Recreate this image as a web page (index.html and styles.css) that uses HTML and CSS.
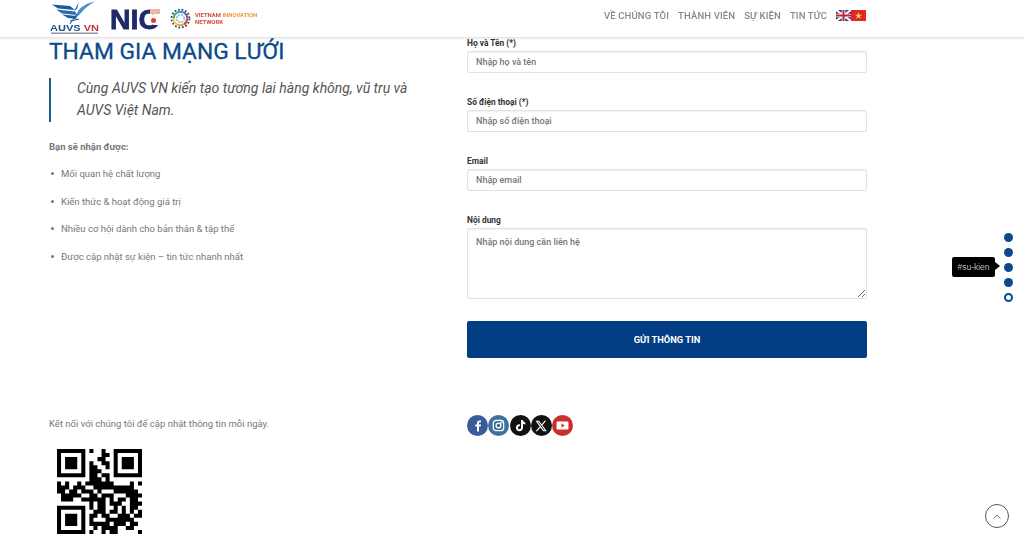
FILE: index.html
```html
<!DOCTYPE html>
<html lang="vi">
<head>
    <meta charset="UTF-8">
    <meta name="viewport" content="width=device-width, initial-scale=1.0">
    <title>AUVS VN</title>
    <link rel="stylesheet" href="styles.css">
</head>
<body>
    <header class="header">
        <div class="logos">
            <svg class="logo-auvs" width="52" height="37" viewBox="0 0 52 37">
                <path d="M2 4.500 L20 6 L25 10 L8 8.500 Z" fill="#1f5c9e"/>
                <path d="M6 9.500 L25 11.500 L27 15 L12 13.500 Z" fill="#2a6cb0"/>
                <path d="M12 14.500 L27 16 L26 19 L18 18 Z" fill="#1f5c9e"/>
                <path d="M45 1.500 C37 3 32 6 28 11 L25 19 L31 13 C35 8 39 5 45 1.500 Z" fill="#4d8fc9"/>
                <path d="M29 2 L27 9 L24 11 Z" fill="#2a6cb0"/>
                <path d="M27 14 L20 24 M20 21 L29 19" stroke="#1c4f8a" stroke-width="1" fill="none"/>
                <text class="auvs-word" x="0" y="30.500" textLength="49" lengthAdjust="spacingAndGlyphs">AUVS <tspan fill="#c8343c">VN</tspan></text>
                <rect x="1" y="32.500" width="47" height="1.500" fill="#8d97a5"/>
            </svg>
            <svg class="logo-nic" width="50" height="37" viewBox="0 0 50 37">
                <text class="nic-word" x="0" y="29" textLength="49" lengthAdjust="spacingAndGlyphs">NIC</text>
                <rect x="43" y="14" width="7" height="11" fill="#fff"/>
                <rect x="40" y="9" width="10" height="5" fill="#eeb9a2"/>
                <circle cx="43.500" cy="20.500" r="2.500" fill="#e2402f"/>
            </svg>
            <svg class="logo-vin" width="21" height="21" viewBox="0 0 21 21" fill="none">
                <circle cx="10.500" cy="10.500" r="9" stroke="#3a4a7a" stroke-width="1.800" stroke-dasharray="1.800 1.800"/>
                <circle cx="10.500" cy="10.500" r="6.800" stroke="#d8453a" stroke-width="2" pathLength="6" stroke-dasharray="1 5"/>
                <circle cx="10.500" cy="10.500" r="6.800" stroke="#f0a52e" stroke-width="2" pathLength="6" stroke-dasharray="1 5" stroke-dashoffset="-1"/>
                <circle cx="10.500" cy="10.500" r="6.800" stroke="#f4d23a" stroke-width="2" pathLength="6" stroke-dasharray="1 5" stroke-dashoffset="-2"/>
                <circle cx="10.500" cy="10.500" r="6.800" stroke="#4fae62" stroke-width="2" pathLength="6" stroke-dasharray="1 5" stroke-dashoffset="-3"/>
                <circle cx="10.500" cy="10.500" r="6.800" stroke="#2a9ccc" stroke-width="2" pathLength="6" stroke-dasharray="1 5" stroke-dashoffset="-4"/>
                <circle cx="10.500" cy="10.500" r="6.800" stroke="#7a4ea0" stroke-width="2" pathLength="6" stroke-dasharray="1 5" stroke-dashoffset="-5"/>
                <circle cx="10.500" cy="10.500" r="3.800" stroke="#6fc0d8" stroke-width="1.500" stroke-dasharray="2 1"/>
            </svg>
            <div class="vin-text"><span class="vin-red">VIETNAM</span> INNOVATION<br><span class="vin-red">NETWORK</span></div>
        </div>
        <nav class="nav">
            <a href="#">VỀ CHÚNG TÔI</a>
            <a href="#">THÀNH VIÊN</a>
            <a href="#">SỰ KIỆN</a>
            <a href="#">TIN TỨC</a>
            <span class="flags">
                <svg width="15" height="11" viewBox="0 0 15 11">
                    <rect width="15" height="11" fill="#2b3a7a"/>
                    <path d="M0 0 L15 11 M15 0 L0 11" stroke="#fff" stroke-width="2.200"/>
                    <path d="M7.500 0 V11 M0 5.500 H15" stroke="#fff" stroke-width="3.600"/>
                    <path d="M7.500 0 V11 M0 5.500 H15" stroke="#c8202f" stroke-width="2"/>
                </svg>
                <svg width="15" height="11" viewBox="0 0 15 11">
                    <rect width="15" height="11" fill="#e0262c"/>
                    <polygon points="7.500,2 8.400,4.700 11.200,4.700 8.900,6.300 9.800,9 7.500,7.300 5.200,9 6.100,6.300 3.800,4.700 6.600,4.700" fill="#fbd92f"/>
                </svg>
            </span>
        </nav>
    </header>

    <main class="main">
        <section class="join">
            <div class="info">
                <h2 class="title">THAM GIA MẠNG LƯỚI</h2>
                <blockquote class="quote">Cùng AUVS VN kiến tạo tương lai hàng không, vũ trụ và AUVS Việt Nam.</blockquote>
                <p class="lead">Bạn sẽ nhận được:</p>
                <ul class="benefits">
                    <li>Mối quan hệ chất lượng</li>
                    <li>Kiến thức &amp; hoạt động giá trị</li>
                    <li>Nhiều cơ hội dành cho bản thân &amp; tập thể</li>
                    <li>Được cập nhật sự kiện – tin tức nhanh nhất</li>
                </ul>
            </div>
            <form class="form">
                <label for="name">Họ và Tên (*)</label>
                <input type="text" id="name" placeholder="Nhập họ và tên">
                <label for="phone">Số điện thoại (*)</label>
                <input type="text" id="phone" placeholder="Nhập số điện thoại">
                <label for="email">Email</label>
                <input type="email" id="email" placeholder="Nhập email">
                <label for="content">Nội dung</label>
                <textarea id="content" placeholder="Nhập nội dung cần liên hệ"></textarea>
                <button type="submit">GỬI THÔNG TIN</button>
            </form>
        </section>

        <footer class="footer">
            <div class="connect">
                <p>Kết nối với chúng tôi để cập nhật thông tin mỗi ngày.</p>
                <svg class="qr" width="85" height="85" viewBox="0 0 21 21">
                    <path fill="#000" d="M0 0h7v7h-7z M14 0h7v7h-7z M0 14h7v7h-7z"/>
                    <path fill="#fff" d="M1 1h5v5h-5z M15 1h5v5h-5z M1 15h5v5h-5z"/>
                    <path fill="#000" d="M2 2h3v3h-3z M16 2h3v3h-3z M2 16h3v3h-3z"/>
                    <path fill="none" stroke="#000" stroke-width="1" d="M8 .5h1M11 .5h1 M11 1.500h2 M10 2.500h2 M8 3.500h1M11 3.500h2 M8 4.500h2M12 4.500h1 M8 5.500h3 M8 6.500h2M11 6.500h2 M8 7.500h3M12 7.500h1 M0 8.500h1M2 8.500h1M5 8.500h1M7 8.500h7M18 8.500h1M20 8.500h1 M0 9.500h3M4 9.500h3M9 9.500h10 M0 10.500h2M3 10.500h2M6 10.500h3M10 10.500h1M14 10.500h6 M1 11.500h5M8 11.500h2M11 11.500h3M17 11.500h4 M1 12.500h3M6 12.500h6M13 12.500h1M15 12.500h2M18 12.500h2 M8 13.500h1M10 13.500h2M13 13.500h3M18 13.500h3 M8 14.500h1M10 14.500h2M14 14.500h1M16 14.500h1M18 14.500h2 M9 15.500h3M13 15.500h2M16 15.500h1M18 15.500h1M20 15.500h1 M8 16.500h2M11 16.500h2M15 16.500h3M19 16.500h2 M8 17.500h1M12 17.500h7 M8 18.500h5M14 18.500h3M18 18.500h2 M9 19.500h1M11 19.500h4M17 19.500h2 M8 20.500h1M11 20.500h1M13 20.500h2M20 20.500h1"/>
                </svg>
            </div>
            <div class="socials">
                <a class="social fb" href="#" aria-label="Facebook">
                    <svg width="12" height="12" viewBox="0 0 24 24"><path fill="#fff" d="M14 23v-10h3.400l.6-4h-4V6.600c0-1.200.5-2 2.100-2H18V1.200C17.500 1.100 16.300 1 15 1c-3 0-5 1.800-5 5.100V9H6.600v4H10v10z"/></svg>
                </a>
                <a class="social ig" href="#" aria-label="Instagram">
                    <svg width="13" height="13" viewBox="0 0 24 24" fill="none" stroke="#fff" stroke-width="2.400"><rect x="2.500" y="2.500" width="19" height="19" rx="5"/><circle cx="12" cy="12" r="4.500"/><circle cx="17.500" cy="6.500" r="0.600" fill="#fff"/></svg>
                </a>
                <a class="social tt" href="#" aria-label="TikTok">
                    <svg width="13" height="13" viewBox="0 0 24 24"><path fill="#fff" d="M13 2h3.600c.3 2.600 1.800 4.200 4.400 4.500v3.600c-1.600 0-3.100-.5-4.400-1.400v7c0 3.900-2.900 6.800-6.600 6.800-3.600 0-6.500-2.900-6.500-6.500 0-3.900 3.400-6.900 7.400-6.300v3.700c-2-.5-3.800.8-3.800 2.600 0 1.600 1.300 2.900 2.900 2.900 1.700 0 3-1.300 3-3.200z"/></svg>
                </a>
                <a class="social xx" href="#" aria-label="X">
                    <svg width="12" height="12" viewBox="0 0 24 24"><path fill="#fff" d="M1 1.500h7.200l5.100 6.900 6-6.900h3l-7.600 8.800 9 12.200h-7.200l-5.700-7.700-6.700 7.700h-3l8.300-9.500zm4.400 2 12.300 17h1.900L7.300 3.500z"/></svg>
                </a>
                <a class="social yt" href="#" aria-label="YouTube">
                    <svg width="13" height="13" viewBox="0 0 24 24"><path fill="#fff" d="M3.500 4.500h17c1.500 0 2.500 1 2.500 2.500v10c0 1.500-1 2.500-2.500 2.500h-17C2 19.500 1 18.500 1 17V7c0-1.500 1-2.500 2.500-2.500z"/><path fill="#c9302c" d="M10 8.500v7l6-3.500z"/></svg>
                </a>
            </div>
        </footer>
    </main>

    <div class="dots">
        <a class="dot" href="#"></a>
        <a class="dot" href="#"></a>
        <a class="dot" href="#"><span class="tip">#su-kien</span></a>
        <a class="dot" href="#"></a>
        <a class="dot active" href="#"></a>
    </div>

    <a class="to-top" href="#" aria-label="Lên đầu trang">
        <svg width="8" height="5" viewBox="0 0 8 5" fill="none" stroke="#777" stroke-width="1"><path d="M0.500 4.500 L4 1 L7.500 4.500"/></svg>
    </a>
</body>
</html>
```

FILE: styles.css
```css
* {
    box-sizing: border-box;
}

html, body {
    height: 100%;
    overflow: hidden;
}

body {
    margin: 0;
    font-family: Roboto, "Liberation Sans", sans-serif;
    font-size: 9.500px;
    color: #777;
    background: #fff;
}

.header {
    position: fixed;
    top: 0;
    left: 0;
    right: 0;
    z-index: 5;
    height: 37px;
    display: flex;
    justify-content: space-between;
    align-items: center;
    padding: 0 158px 0 50px;
    background: #fff;
    box-shadow: 0 1px 3px rgba(0, 0, 0, 0.16);
}

.logos {
    display: flex;
    align-items: center;
}

.logos svg {
    display: block;
}

.auvs-word {
    font-family: "Liberation Sans", sans-serif;
    font-size: 9.500px;
    font-weight: 700;
    fill: #1d4f8c;
}

.logo-nic {
    margin-left: 8px;
}

.nic-word {
    font-family: "Liberation Sans", sans-serif;
    font-size: 27px;
    font-weight: 700;
    fill: #1e2a6b;
    stroke: #1e2a6b;
    stroke-width: 0.800px;
}

.logo-vin {
    margin-left: 10px;
}

.vin-text {
    margin-left: 4px;
    font-size: 5.900px;
    font-weight: 700;
    line-height: 7px;
    color: #e8983a;
}

.vin-red {
    color: #d04a3a;
}

.nav {
    display: flex;
    align-items: center;
    gap: 9px;
    padding-bottom: 6px;
}

.nav a {
    font-size: 9.500px;
    font-weight: 500;
    letter-spacing: 0.150px;
    color: #888;
    text-decoration: none;
}

.flags {
    display: flex;
}

.flags svg {
    display: block;
}

.main {
    padding: 40px 0 0 49px;
}

.join {
    display: grid;
    grid-template-columns: 418px 400px;
}

.title {
    margin: 0;
    font-size: 22.800px;
    font-weight: 400;
    line-height: 23px;
    color: #0b4a8a;
    -webkit-text-stroke: 0.300px #0b4a8a;
}

.quote {
    width: 371px;
    margin: 15px 0 0;
    padding: 0 0 1px 26px;
    border-left: 2px solid #1a5f8f;
    font-size: 14px;
    font-style: italic;
    line-height: 21.500px;
    color: #555;
}

.lead {
    margin: 18px 0 0;
    font-weight: 700;
    line-height: 14px;
}

.benefits {
    margin: 13px 0 0;
    padding-left: 12px;
    list-style: none;
}

.benefits li {
    position: relative;
    line-height: 14px;
    margin-bottom: 13.600px;
}

.benefits li::before {
    content: "";
    position: absolute;
    left: -10px;
    top: 5px;
    width: 3px;
    height: 3px;
    border-radius: 50%;
    background: #777;
}

.form {
    display: flex;
    flex-direction: column;
}

.form label {
    font-size: 8.400px;
    font-weight: 700;
    line-height: 11px;
    color: #333;
    margin-bottom: 2px;
    margin-top: 24px;
}

.form label:first-child {
    margin-top: -2px;
}

.form input, .form textarea {
    display: block;
    width: 100%;
    height: 21.850px;
    padding: 0 8px;
    border: 1px solid #e2e2e2;
    border-radius: 2px;
    font-family: inherit;
    font-size: 9px;
    background: #fff;
    box-shadow: inset 0 1px 2px rgba(0, 0, 0, 0.06);
}

.form textarea {
    height: 71px;
    padding: 8px;
}

.form input::placeholder, .form textarea::placeholder {
    font-weight: 500;
    color: #777;
}

.form button {
    height: 37px;
    margin-top: 22.500px;
    border: none;
    border-radius: 2px;
    font-family: inherit;
    font-size: 9.300px;
    font-weight: 700;
    color: #fff;
    background: #033e85;
    cursor: pointer;
}

.footer {
    display: grid;
    grid-template-columns: 418px 400px;
    margin-top: 59px;
}

.connect p {
    margin: 0 0 18px;
    line-height: 14px;
}

.qr {
    display: block;
    margin-left: 8px;
}

.socials {
    display: flex;
    gap: 0.300px;
    margin-top: -2px;
    align-items: flex-start;
}

.social {
    display: flex;
    width: 21px;
    height: 21px;
    align-items: center;
    justify-content: center;
    border-radius: 50%;
}

.fb { background: #3a5a9c; }
.ig { background: #3f729b; }
.tt { background: #111; }
.xx { background: #111; }
.yt { background: #c9302c; }

.dots {
    position: fixed;
    right: 11px;
    top: 233px;
    display: flex;
    flex-direction: column;
    gap: 5.900px;
}

.dot {
    position: relative;
    display: block;
    width: 9px;
    height: 9px;
    border-radius: 50%;
    background: #0b4a8a;
}

.dot.active {
    background: #fff;
    border: 2px solid #0b4a8a;
}

.tip {
    position: absolute;
    right: 18px;
    top: -6px;
    width: 43px;
    height: 20px;
    border-radius: 2px;
    font-family: "Liberation Sans", sans-serif;
    font-size: 8.500px;
    line-height: 20px;
    text-align: center;
    color: #bbb;
    background: #000;
}

.tip::after {
    content: "";
    position: absolute;
    right: -5px;
    top: 5.500px;
    border-left: 5px solid #000;
    border-top: 4.500px solid transparent;
    border-bottom: 4.500px solid transparent;
}

.to-top {
    position: fixed;
    right: 15px;
    bottom: 11px;
    display: flex;
    width: 24px;
    height: 24px;
    align-items: center;
    justify-content: center;
    border: 1.500px solid #555;
    border-radius: 50%;
}
```
